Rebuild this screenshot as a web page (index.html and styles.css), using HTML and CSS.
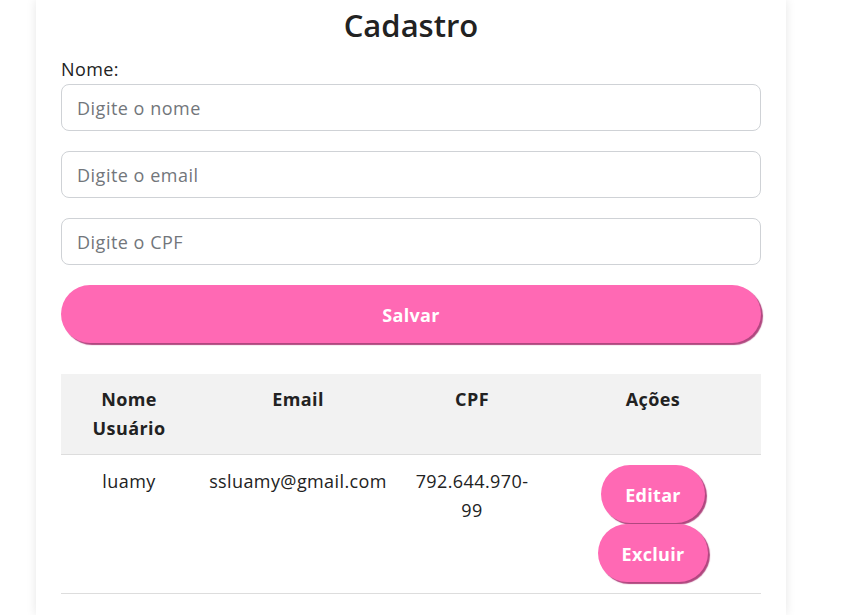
FILE: index.html
```html
<!DOCTYPE html>
<html lang="pt-BR">
<head>
<meta charset="utf-8">
<title>Cadastro</title>
<link rel="stylesheet" href="styles.css">
</head>
<body>
<main class="card">
  <h2 class="title">Cadastro</h2>
  <form class="form">
    <label class="label" for="nome">Nome:</label>
    <input class="field" id="nome" type="text" placeholder="Digite o nome">
    <input class="field" type="email" placeholder="Digite o email">
    <input class="field" type="text" placeholder="Digite o CPF">
    <button class="btn btn-wide" type="button">Salvar</button>
  </form>
  <table class="table">
    <colgroup>
      <col class="c1"><col class="c2"><col class="c3"><col class="c4">
    </colgroup>
    <thead>
      <tr><th>Nome Usuário</th><th>Email</th><th>CPF</th><th>Ações</th></tr>
    </thead>
    <tbody>
      <tr>
        <td>luamy</td>
        <td>ssluamy@gmail.com</td>
        <td>792.644.970-99</td>
        <td>
          <div class="actions">
            <button class="btn" type="button">Editar</button>
            <button class="btn" type="button">Excluir</button>
          </div>
        </td>
      </tr>
    </tbody>
  </table>
</main>
</body>
</html>
```
FILE: styles.css
```css
html, body {
  margin: 0;
  background: #ffffff;
}
body {
  font-family: "Open Sans", "Noto Sans", sans-serif;
  font-size: 18px;
  line-height: 1.6;
  letter-spacing: 0.4px;
  color: #222;
}
.card {
  box-sizing: border-box;
  width: 750px;
  min-height: 100vh;
  margin-left: 36px;
  padding: 3px 25px 20px;
  background: #fff;
  box-shadow: 0 0 10px rgba(0, 0, 0, 0.1);
}
.title {
  margin: 0 0 8px;
  font-size: 31px;
  font-weight: 600;
  line-height: 44px;
  letter-spacing: 0;
  text-align: center;
  color: #222;
}
.form {
  display: flex;
  flex-direction: column;
}
.label {
  display: block;
  line-height: 29px;
}
.field {
  box-sizing: border-box;
  height: 47px;
  margin: 0 0 20px;
  padding: 0 15px;
  border: 1px solid #cfd2d6;
  border-radius: 8px;
  font-family: inherit;
  font-size: 18px;
  letter-spacing: 0.5px;
  color: #222;
  background: #fff;
}
.field::placeholder {
  color: #72767b;
}
.btn {
  box-sizing: border-box;
  padding: 16px 24px 13px;
  border: none;
  border-radius: 30px;
  background: #ff69b4;
  color: #fff;
  font-family: inherit;
  font-size: 18px;
  font-weight: 700;
  line-height: 29px;
  letter-spacing: 0.3px;
  box-shadow: 2px 2px 1px #b0477f;
  cursor: pointer;
}
.btn-wide {
  width: 100%;
  margin-bottom: 31px;
}
.table {
  width: 700px;
  border-collapse: collapse;
  table-layout: fixed;
}
.c1 { width: 136px; }
.c2 { width: 202px; }
.c3 { width: 146px; }
.c4 { width: 216px; }
.table th,
.table td {
  padding: 11px 12px;
  text-align: center;
  vertical-align: top;
  border-bottom: 1px solid #ddd;
  line-height: 29px;
}
.table th {
  background: #f2f2f2;
  font-weight: 700;
}
.table td {
  padding-top: 12px;
  padding-bottom: 11px;
}
.actions {
  display: flex;
  flex-direction: column;
  align-items: center;
  gap: 1px;
  margin-top: -2px;
}
```
